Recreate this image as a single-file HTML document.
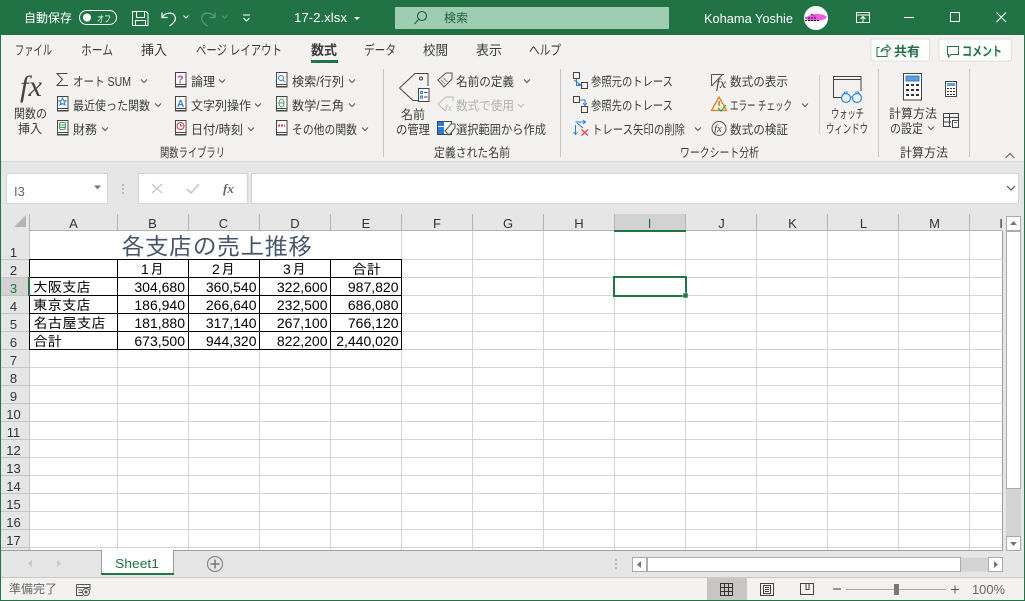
<!DOCTYPE html>
<html lang="ja"><head><meta charset="utf-8"><title>17-2.xlsx - Excel</title>
<style>
html,body{margin:0;padding:0;background:#fff}
svg{display:block;position:absolute;left:0;top:0}
text{font-family:"Liberation Sans","Noto Sans CJK JP",sans-serif}
.r{font-size:12.5px;fill:#3c3c3c}
.t{font-size:13.5px;fill:#3c3c3c}
.w{font-size:12px;fill:#fff}
.h{font-size:13px;fill:#333}
.c{font-size:14px;fill:#000}
.j{font-size:14px;fill:#000;font-family:"Liberation Sans","IPAGothic","Noto Sans CJK JP",sans-serif}
.n{font-size:14px;fill:#000;text-anchor:end}
.g{fill:none;stroke:#666;stroke-width:1}
</style></head><body>
<svg width="1025" height="601" viewBox="0 0 1025 601" xmlns="http://www.w3.org/2000/svg">
<defs>
<g id="bk"><rect x=".5" y=".5" width="10.5" height="14.500" fill="#fff" stroke="#444"/><path d="M1 12.500h10" stroke="#444" fill="none"/><path d="M0 14h11.500v1.500H0z" fill="#444"/></g>
<path id="ch" d="M-3 -1.5L0 1.5L3 -1.5" fill="none" stroke="#555" stroke-width="1"/>
</defs>
<!-- base -->
<rect width="1025" height="601" fill="#e6e6e6"/>
<rect x="0" y="0" width="1025" height="35" fill="#217346"/>
<rect x="1" y="35" width="1023" height="126" fill="#f3f2f1"/>
<rect x="1" y="161" width="1023" height="1" fill="#d6d6d6"/>
<rect x="1" y="578" width="1023" height="22" fill="#f3f2f1"/>
<rect x="1" y="577" width="1023" height="1" fill="#c8c8c8"/>

<!-- title bar -->
<text class="w" x="24" y="22" textLength="48" lengthAdjust="spacingAndGlyphs">自動保存</text>
<rect x="79.5" y="10.5" width="37" height="14" rx="7" fill="none" stroke="#fff"/>
<circle cx="87" cy="17.5" r="4" fill="#fff"/>
<text x="97" y="22" style="font-size:9px;fill:#fff" textLength="14" lengthAdjust="spacingAndGlyphs">オフ</text>
<path d="M132.500 11.500H146L148 13.500V25.500H132.500ZM136.500 11.500V17.500H144.500V11.500M135.500 25.500V20.500H145.500V25.500" fill="none" stroke="#fff"/>
<path d="M162 12.500V17.500H167.500M162.500 17C165 12.500 173 11.500 175 16.500C176.500 20 174 23 169.500 26" fill="none" stroke="#fff" stroke-width="1.200"/>
<path d="M183.500 15.500L186 18L188.500 15.500" fill="none" stroke="#fff"/>
<path d="M215 12.500V17.500H209.500M214.500 17C212 12.500 204 11.500 202 16.500C200.500 20 203 23 207.500 26" fill="none" stroke="#5f9a7c" stroke-width="1.200"/>
<path d="M222 15.500L224.500 18L227 15.500" fill="none" stroke="#5f9a7c"/>
<path d="M243 15H250M243.500 18L246.500 21L249.500 18" fill="none" stroke="#fff"/>
<text class="w" x="294" y="22" textLength="53" lengthAdjust="spacingAndGlyphs" style="font-size:13px">17-2.xlsx</text>
<path d="M354 17H360L357 20Z" fill="#fff"/>
<rect x="395" y="7" width="274" height="22" fill="#9fcdb3"/>
<circle cx="422" cy="16" r="4.500" fill="none" stroke="#1d5f3a" stroke-width="1.100"/>
<path d="M418.500 19.500L414.500 24" stroke="#1d5f3a" stroke-width="1.100"/>
<text x="444" y="22" style="font-size:12px;fill:#1d5f3a" textLength="24" lengthAdjust="spacingAndGlyphs">検索</text>
<text class="w" x="704" y="23" textLength="89" lengthAdjust="spacingAndGlyphs" style="font-size:12.500px">Kohama Yoshie</text>
<circle cx="816" cy="18" r="12" fill="#fff"/>
<path d="M807 17C811 13 823 13 827 17C825 21 813 22 807 20Z" fill="#f05ae6"/>
<path d="M805 18H817M805 20.500H819M811 14l3 2" stroke="#111" stroke-dasharray="2 1" fill="none"/>
<path d="M856.500 12.500H869.500V22.500H856.500ZM856.500 15H869.500M863 22V17M860.500 19L863 16.500L865.500 19" fill="none" stroke="#fff"/>
<path d="M904 17.500H914" stroke="#fff"/>
<rect x="950.500" y="12.500" width="9" height="9" fill="none" stroke="#fff"/>
<path d="M996.500 12.500L1006 22M1006 12.500L996.500 22" stroke="#fff"/>

<!-- ribbon tabs -->
<text class="t" x="15" y="55" textLength="37" lengthAdjust="spacingAndGlyphs">ファイル</text>
<text class="t" x="81" y="55" textLength="32" lengthAdjust="spacingAndGlyphs">ホーム</text>
<text class="t" x="141" y="55" textLength="26" lengthAdjust="spacingAndGlyphs">挿入</text>
<text class="t" x="196" y="55" textLength="86" lengthAdjust="spacingAndGlyphs">ページ レイアウト</text>
<text class="t" x="311" y="55" textLength="26" lengthAdjust="spacingAndGlyphs" font-weight="bold">数式</text>
<rect x="311" y="60" width="27" height="3" fill="#217346"/>
<text class="t" x="364" y="55" textLength="32" lengthAdjust="spacingAndGlyphs">データ</text>
<text class="t" x="423" y="55" textLength="25" lengthAdjust="spacingAndGlyphs">校閲</text>
<text class="t" x="476" y="55" textLength="26" lengthAdjust="spacingAndGlyphs">表示</text>
<text class="t" x="529" y="55" textLength="32" lengthAdjust="spacingAndGlyphs">ヘルプ</text>
<rect x="871" y="39" width="58.500" height="22" rx="2" fill="#fff" stroke="#e1dfdd"/>
<path d="M879.500 47.500H877V56.500H887V52M881 52C881.500 48.500 884 47.500 887 47.500V45L890.500 48.500L887 52V49.500C884.500 49.500 882.500 50 881 52Z" fill="none" stroke="#217346"/>
<text x="894" y="56" style="font-size:13px;fill:#217346;font-weight:bold" textLength="26" lengthAdjust="spacingAndGlyphs">共有</text>
<rect x="939" y="39" width="72.500" height="22" rx="2" fill="#fff" stroke="#e1dfdd"/>
<path d="M947.500 46.500H958.500V54.500H951L948.500 57V54.500H947.500Z" fill="none" stroke="#217346"/>
<text x="962" y="56" style="font-size:13px;fill:#217346;font-weight:bold" textLength="40" lengthAdjust="spacingAndGlyphs">コメント</text>

<!-- separators -->
<path d="M383.500 69V157M560.500 69V157M878.500 69V157M969.500 69V157" stroke="#c8c6c4"/>
<path d="M819.500 75V134" stroke="#d2d0ce"/>

<!-- group 1 -->
<text x="20" y="96" style="font-family:'Liberation Serif',serif;font-style:italic;font-size:30px;fill:#444" textLength="22" lengthAdjust="spacingAndGlyphs">fx</text>
<text class="r" x="14" y="118" textLength="33" lengthAdjust="spacingAndGlyphs">関数の</text>
<text class="r" x="18" y="133" textLength="24" lengthAdjust="spacingAndGlyphs">挿入</text>
<path d="M67.500 73.500H57L62.500 79.500L57 85.500H68" fill="none" stroke="#444"/>
<text class="r" x="73" y="86" textLength="58" lengthAdjust="spacingAndGlyphs">オート SUM</text>
<use href="#ch" x="144" y="81"/>
<use href="#bk" x="57" y="96"/>
<path d="M62.500 98L63.700 100.700H66L64.200 102.500L65 105L62.500 103.500L60 105L60.800 102.500L59 100.700H61.300Z" fill="none" stroke="#2b7cd3"/>
<text class="r" x="73" y="110" textLength="77" lengthAdjust="spacingAndGlyphs">最近使った関数</text>
<use href="#ch" x="158" y="105"/>
<use href="#bk" x="57" y="120"/>
<rect x="59.500" y="122.500" width="6" height="7" rx="1.500" fill="none" stroke="#3fa35b"/>
<path d="M59.500 125H65.500M59.500 127.500H65.500" stroke="#3fa35b"/>
<text class="r" x="73" y="134" textLength="24" lengthAdjust="spacingAndGlyphs">財務</text>
<use href="#ch" x="105" y="129"/>
<use href="#bk" x="175" y="72"/>
<text x="177" y="83" style="font-size:11px;fill:#b146c2;font-weight:bold">?</text>
<text class="r" x="191" y="86" textLength="24" lengthAdjust="spacingAndGlyphs">論理</text>
<use href="#ch" x="222" y="81"/>
<use href="#bk" x="175" y="96"/>
<text x="177" y="107" style="font-size:10px;fill:#2b7cd3;font-weight:bold">A</text>
<text class="r" x="191" y="110" textLength="60" lengthAdjust="spacingAndGlyphs">文字列操作</text>
<use href="#ch" x="258" y="105"/>
<use href="#bk" x="175" y="120"/>
<circle cx="180.500" cy="126" r="3.500" fill="none" stroke="#d13438"/>
<path d="M180.500 124V126H182.500" fill="none" stroke="#d13438"/>
<text class="r" x="191" y="134" textLength="52" lengthAdjust="spacingAndGlyphs">日付/時刻</text>
<use href="#ch" x="251" y="129"/>
<use href="#bk" x="276" y="72"/>
<circle cx="281" cy="78" r="2.500" fill="none" stroke="#2b7cd3"/>
<path d="M283 80L285 82" stroke="#2b7cd3"/>
<text class="r" x="292" y="86" textLength="52" lengthAdjust="spacingAndGlyphs">検索/行列</text>
<use href="#ch" x="352" y="81"/>
<use href="#bk" x="276" y="96"/>
<ellipse cx="281.500" cy="103" rx="2.500" ry="4" fill="none" stroke="#3fa35b"/>
<path d="M279 103H284" stroke="#3fa35b"/>
<text class="r" x="292" y="110" textLength="52" lengthAdjust="spacingAndGlyphs">数学/三角</text>
<use href="#ch" x="352" y="105"/>
<use href="#bk" x="276" y="120"/>
<path d="M278 125.500h2M281 125.500h2M284 125.500h1" stroke="#d13438" stroke-width="2"/>
<text class="r" x="292" y="134" textLength="65" lengthAdjust="spacingAndGlyphs">その他の関数</text>
<use href="#ch" x="365" y="129"/>
<text class="r" x="160" y="157" textLength="65" lengthAdjust="spacingAndGlyphs">関数ライブラリ</text>

<!-- group 2 -->
<path d="M399.500 88L415 73.500H428V86M399.500 88L413 100.500H419" fill="none" stroke="#444"/>
<circle cx="421" cy="78.500" r="1.500" fill="none" stroke="#444"/>
<rect x="418.500" y="88.500" width="10.500" height="13" fill="#fff" stroke="#444"/>
<path d="M420.500 91.500h2v2h-2zM420.500 96h2v2h-2z" fill="none" stroke="#2b7cd3"/>
<path d="M424 92.500h3.500M424 97h3.500" stroke="#444"/>
<text class="r" x="401" y="119" textLength="24" lengthAdjust="spacingAndGlyphs">名前</text>
<text class="r" x="396" y="134" textLength="34" lengthAdjust="spacingAndGlyphs">の管理</text>
<path d="M438 80L446 73H452V79L444 87Z" fill="none" stroke="#555"/>
<path d="M441 80l4 4M443.500 78l4 4" stroke="#888"/>
<text class="r" x="456" y="86" textLength="58" lengthAdjust="spacingAndGlyphs">名前の定義</text>
<use href="#ch" x="527" y="81"/>
<path d="M438 104L446 97H453V101M438 104L445 111" fill="none" stroke="#bbb"/>
<text x="445" y="111" style="font-size:9px;font-style:italic;fill:#bbb">fx</text>
<text class="r" x="456" y="110" textLength="58" lengthAdjust="spacingAndGlyphs" style="fill:#b0b0b0">数式で使用</text>
<path d="M518 104l3 3 3-3" fill="none" stroke="#bbb"/>
<rect x="437.500" y="121.500" width="14" height="13" fill="#fff" stroke="#444"/>
<rect x="438" y="127" width="6" height="7" fill="#2b7cd3"/>
<rect x="438" y="122" width="6" height="4" fill="#2b7cd3"/>
<path d="M445 131L451 124H455V128L449 135Z" fill="#f3f2f1" stroke="#555"/>
<text class="r" x="456" y="134" textLength="90" lengthAdjust="spacingAndGlyphs">選択範囲から作成</text>
<text class="r" x="434" y="157" textLength="76" lengthAdjust="spacingAndGlyphs">定義された名前</text>

<!-- group 3 -->
<rect x="573.500" y="72.500" width="6" height="6" fill="none" stroke="#444"/>
<rect x="581.500" y="82.500" width="6" height="6" fill="none" stroke="#444"/>
<path d="M576.500 79V85.500H580M578 84L581 85.500M574 80L581 85" fill="none" stroke="#2b7cd3"/>
<text class="r" x="591" y="86" textLength="82" lengthAdjust="spacingAndGlyphs">参照元のトレース</text>
<rect x="573.500" y="96.500" width="6" height="6" fill="none" stroke="#444"/>
<rect x="581.500" y="106.500" width="6" height="6" fill="none" stroke="#444"/>
<path d="M580 100H585V105M583 103L585 105.500L587 103" fill="none" stroke="#2b7cd3"/>
<text class="r" x="591" y="110" textLength="82" lengthAdjust="spacingAndGlyphs">参照先のトレース</text>
<path d="M575.500 125V134M573.500 132L575.500 134.500L577.500 132M575.500 122H585M583 120L585.500 122L583 124M577 123L583 128" fill="none" stroke="#2b7cd3"/>
<path d="M581.500 129.500L588 135.500M588 129.500L581.500 135.500" stroke="#e0443e" stroke-width="1.200"/>
<text class="r" x="592" y="134" textLength="93" lengthAdjust="spacingAndGlyphs">トレース矢印の削除</text>
<use href="#ch" x="698" y="129"/>
<path d="M711.500 86V74.500H724M711.500 86L722 75" fill="none" stroke="#555"/>
<text x="716" y="88" style="font-family:'Liberation Serif',serif;font-style:italic;font-size:14px;fill:#444">fx</text>
<text class="r" x="730" y="86" textLength="58" lengthAdjust="spacingAndGlyphs">数式の表示</text>
<path d="M719 97L711.500 110.500H726.500Z" fill="#fdf3df" stroke="#d9822b" stroke-width="1.300"/>
<path d="M719 101V106" stroke="#7a3a0c"/>
<path d="M718 108L721 111L726 105" fill="none" stroke="#3fa35b" stroke-width="1.300"/>
<text class="r" x="730" y="110" textLength="62" lengthAdjust="spacingAndGlyphs">エラー チェック</text>
<use href="#ch" x="805" y="105"/>
<circle cx="719" cy="128.500" r="7" fill="none" stroke="#555"/>
<text x="714" y="132" style="font-family:'Liberation Serif',serif;font-style:italic;font-size:11px;fill:#444">fx</text>
<text class="r" x="730" y="134" textLength="58" lengthAdjust="spacingAndGlyphs">数式の検証</text>
<text class="r" x="680" y="157" textLength="79" lengthAdjust="spacingAndGlyphs">ワークシート分析</text>
<!-- watch -->
<path d="M841 97.500H833.500V76.500H861V91" fill="none" stroke="#444"/>
<path d="M833.500 79.500H861" stroke="#444"/>
<circle cx="846" cy="98" r="4.500" fill="none" stroke="#2b88d8" stroke-width="1.200"/>
<circle cx="857" cy="98" r="4.500" fill="none" stroke="#2b88d8" stroke-width="1.200"/>
<path d="M850.500 97H852.500M842 96L845 92H848M861 96L858 92H855" fill="none" stroke="#2b88d8"/>
<text class="r" x="831" y="118" textLength="33" lengthAdjust="spacingAndGlyphs">ウォッチ</text>
<text class="r" x="826" y="133" textLength="42" lengthAdjust="spacingAndGlyphs">ウィンドウ</text>
<!-- calc -->
<rect x="903.500" y="73.500" width="18" height="26.500" fill="#fff" stroke="#444"/>
<rect x="906" y="76" width="13" height="5" fill="#5ea0dc" stroke="#2b7cd3"/>
<path d="M906 84h3v2h-3zM911 84h3v2h-3zM916 84h3v2h-3zM906 89h3v2h-3zM911 89h3v2h-3zM916 89h3v2h-3zM906 94h3v2h-3zM911 94h3v2h-3zM916 94h3v2h-3z" fill="#333"/>
<rect x="945.500" y="81.500" width="11" height="15" fill="#fff" stroke="#444"/>
<rect x="947" y="83" width="8" height="3" fill="#5ea0dc"/>
<path d="M947 88h2v1h-2zM950 88h2v1h-2zM953 88h2v1h-2zM947 91h2v1h-2zM950 91h2v1h-2zM953 91h2v1h-2zM947 94h2v1h-2zM950 94h2v1h-2zM953 94h2v1h-2z" fill="#333"/>
<path d="M943.500 113.500H958.500V121M943.500 113.500V126.500H951M943.500 117.500H958.500M943.500 122H951M949.500 113.500V126.500" fill="none" stroke="#444"/>
<rect x="952.500" y="120.500" width="6" height="7" fill="#fff" stroke="#444"/>
<path d="M954 122.500h3" stroke="#2b7cd3"/>
<text class="r" x="889" y="118" textLength="48" lengthAdjust="spacingAndGlyphs">計算方法</text>
<text class="r" x="890" y="133" textLength="33" lengthAdjust="spacingAndGlyphs">の設定</text>
<use href="#ch" x="931" y="128"/>
<text class="r" x="900" y="157" textLength="48" lengthAdjust="spacingAndGlyphs">計算方法</text>
<path d="M1005.500 158L1010 153.500L1014.500 158" fill="none" stroke="#555"/>

<!-- formula bar -->
<rect x="6.500" y="173.500" width="101" height="30" fill="#fff" stroke="#d4d4d4"/>
<text x="14" y="196" style="font-size:13px;fill:#666">I3</text>
<path d="M94 185.500H101L97.500 189.500Z" fill="#777"/>
<path d="M123 184v2M123 188v2M123 192v2" stroke="#aaa" stroke-width="1.500"/>
<rect x="138.500" y="173.500" width="109" height="30" fill="#fff" stroke="#d4d4d4"/>
<path d="M152 184L162 193M162 184L152 193" stroke="#c8c8c8" stroke-width="1.400"/>
<path d="M187 189L191 193L199 184" fill="none" stroke="#c8c8c8" stroke-width="1.600"/>
<text x="223" y="193" style="font-family:'Liberation Serif',serif;font-style:italic;font-weight:bold;font-size:13px;fill:#666">fx</text>
<rect x="251.500" y="173.500" width="767" height="30" fill="#fff" stroke="#d4d4d4"/>
<path d="M1007 186L1011 190L1015 186" fill="none" stroke="#555" stroke-width="1.200"/>

<!-- sheet -->
<rect x="29" y="231" width="973" height="319" fill="#fff"/>
<rect x="614" y="214" width="71" height="17" fill="#d2d2d2"/>
<rect x="1" y="277" width="28" height="18" fill="#d2d2d2"/>
<!-- gridlines -->
<path stroke="#d4d4d4" fill="none" d="M117.500 231V550M188.500 231V550M259.500 231V550M330.500 231V550M401.500 231V550M472.500 231V550M543.500 231V550M614.500 231V550M685.500 231V550M756.500 231V550M827.500 231V550M898.500 231V550M969.500 231V550M29 259.500H1002M29 277.500H1002M29 295.500H1002M29 313.500H1002M29 331.500H1002M29 349.500H1002M29 367.500H1002M29 385.500H1002M29 403.500H1002M29 421.500H1002M29 439.500H1002M29 457.500H1002M29 475.500H1002M29 493.500H1002M29 511.500H1002M29 529.500H1002M29 547.500H1002"/>
<rect x="29" y="231" width="372" height="28" fill="#fff"/>
<!-- headers lines -->
<path stroke="#b4b4b4" fill="none" d="M29.500 214V231M117.500 214V231M188.500 214V231M259.500 214V231M330.500 214V231M401.500 214V231M472.500 214V231M543.500 214V231M614.500 214V231M685.500 214V231M756.500 214V231M827.500 214V231M898.500 214V231M969.500 214V231M29 230.500H1002"/>
<path stroke="#c4c4c4" fill="none" d="M1 259.500H29M1 277.500H29M1 295.500H29M1 313.500H29M1 331.500H29M1 349.500H29M1 367.500H29M1 385.500H29M1 403.500H29M1 421.500H29M1 439.500H29M1 457.500H29M1 475.500H29M1 493.500H29M1 511.500H29M1 529.500H29M1 547.500H29M29.500 231V550"/>
<path d="M26 215V227H14Z" fill="#b4b4b4"/>
<rect x="614" y="230" width="72" height="2" fill="#217346"/>
<path stroke="#9e9e9e" fill="none" d="M1002.500 231V550.500M1 550.500H1003"/>
<!-- column heads -->
<g text-anchor="middle">
<text class="h" x="73.500" y="228">A</text><text class="h" x="152.500" y="228">B</text><text class="h" x="223.500" y="228">C</text><text class="h" x="295" y="228">D</text><text class="h" x="366" y="228">E</text><text class="h" x="437" y="228">F</text><text class="h" x="508" y="228">G</text><text class="h" x="579" y="228">H</text><text class="h" x="649.500" y="228" style="fill:#217346">I</text><text class="h" x="721.500" y="228">J</text><text class="h" x="792.500" y="228">K</text><text class="h" x="863.500" y="228">L</text><text class="h" x="934.500" y="228">M</text><text class="h" x="1001" y="228">I</text>
</g>
<g text-anchor="middle">
<text class="h" x="13.500" y="257">1</text><text class="h" x="13.500" y="275">2</text><text class="h" x="13.500" y="293" style="fill:#217346">3</text><text class="h" x="13.500" y="311">4</text><text class="h" x="13.500" y="329">5</text><text class="h" x="13.500" y="347">6</text><text class="h" x="13.500" y="365">7</text><text class="h" x="13.500" y="383">8</text><text class="h" x="13.500" y="401">9</text><text class="h" x="13.500" y="419">10</text><text class="h" x="13.500" y="437">11</text><text class="h" x="13.500" y="455">12</text><text class="h" x="13.500" y="473">13</text><text class="h" x="13.500" y="491">14</text><text class="h" x="13.500" y="509">15</text><text class="h" x="13.500" y="527">16</text><text class="h" x="13.500" y="545">17</text>
</g>
<!-- table borders -->
<path stroke="#000" fill="none" d="M29.500 259V349.500M117.500 259V350M188.500 259V350M259.500 259V350M330.500 259V350M401.500 259V350M29 259.500H402M29 277.500H402M29 295.500H402M29 313.500H402M29 331.500H402M29 349.500H402"/>
<rect x="28" y="277" width="2" height="19" fill="#217346"/>
<!-- cell text -->
<text x="121" y="255" style="font-size:24px;fill:#44546a;font-family:'Liberation Sans','IPAGothic','Noto Sans CJK JP',sans-serif" textLength="191" lengthAdjust="spacingAndGlyphs">各支店の売上推移</text>
<text class="j" x="141" y="274" textLength="23" lengthAdjust="spacing">1 月</text>
<text class="j" x="212" y="274" textLength="23" lengthAdjust="spacing">2 月</text>
<text class="j" x="283" y="274" textLength="23" lengthAdjust="spacing">3 月</text>
<text class="j" x="352" y="274" textLength="29" lengthAdjust="spacingAndGlyphs">合計</text>
<text class="j" x="33" y="292" textLength="58" lengthAdjust="spacingAndGlyphs">大阪支店</text>
<text class="j" x="33" y="310" textLength="58" lengthAdjust="spacingAndGlyphs">東京支店</text>
<text class="j" x="33" y="328" textLength="73" lengthAdjust="spacingAndGlyphs">名古屋支店</text>
<text class="j" x="33" y="346" textLength="29" lengthAdjust="spacingAndGlyphs">合計</text>
<text class="n" x="185" y="292">304,680</text><text class="n" x="256.500" y="292">360,540</text><text class="n" x="327.500" y="292">322,600</text><text class="n" x="398.500" y="292">987,820</text>
<text class="n" x="185" y="310">186,940</text><text class="n" x="256.500" y="310">266,640</text><text class="n" x="327.500" y="310">232,500</text><text class="n" x="398.500" y="310">686,080</text>
<text class="n" x="185" y="328">181,880</text><text class="n" x="256.500" y="328">317,140</text><text class="n" x="327.500" y="328">267,100</text><text class="n" x="398.500" y="328">766,120</text>
<text class="n" x="185" y="346">673,500</text><text class="n" x="256.500" y="346">944,320</text><text class="n" x="327.500" y="346">822,200</text><text class="n" x="398.500" y="346">2,440,020</text>
<!-- selection -->
<rect x="614" y="277" width="72" height="19" fill="none" stroke="#217346" stroke-width="2"/>
<rect x="683" y="293" width="5" height="5" fill="#217346" stroke="#fff" stroke-width=".5"/>

<!-- v scrollbar -->
<rect x="1006" y="216" width="15" height="320" fill="#d4d4d4"/>
<rect x="1006.500" y="216.500" width="14" height="14" fill="#fff" stroke="#ababab"/>
<rect x="1006.500" y="231.500" width="14" height="257" fill="#fff" stroke="#ababab"/>
<rect x="1006.500" y="536.500" width="14" height="14" fill="#fff" stroke="#ababab"/>
<path d="M1010 225H1017L1013.500 221Z" fill="#777"/>
<path d="M1010 542H1017L1013.500 546Z" fill="#777"/>

<!-- tab bar -->
<path d="M32 560V567L28 563.500Z" fill="#c8c8c8"/>
<path d="M57 560V567L61 563.500Z" fill="#c8c8c8"/>
<rect x="101" y="550" width="73" height="24" fill="#fff"/>
<path d="M101.500 550V575M173.500 550V575" stroke="#9e9e9e"/>
<rect x="101" y="573" width="73" height="2" fill="#217346"/>
<text x="115" y="568" style="font-size:13px;fill:#217346" textLength="44" lengthAdjust="spacingAndGlyphs">Sheet1</text>
<circle cx="215" cy="564" r="7.500" fill="none" stroke="#888" stroke-width="1.200"/>
<path d="M215 559.500V568.500M210.500 564H219.500" stroke="#777" stroke-width="1.500"/>
<path d="M616 559v2M616 563v2M616 567v2" stroke="#aaa" stroke-width="1.500"/>
<rect x="632.500" y="557.500" width="14" height="14" fill="#fff" stroke="#ababab"/>
<rect x="647.500" y="557.500" width="313" height="14" fill="#fff" stroke="#ababab"/>
<rect x="961" y="557.500" width="27" height="14" fill="#d4d4d4"/>
<rect x="988.500" y="557.500" width="14" height="14" fill="#fff" stroke="#ababab"/>
<path d="M641 561V568L637 564.500Z" fill="#777"/>
<path d="M994 561V568L998 564.500Z" fill="#777"/>

<!-- status bar -->
<text x="9" y="593" style="font-size:12px;fill:#666" textLength="48" lengthAdjust="spacingAndGlyphs">準備完了</text>
<path d="M76.500 584.500H90V590M76.500 584.500V595.500H83M76.500 587.500H90M78.500 590H82M78.500 592.500H82" fill="none" stroke="#555"/>
<circle cx="86" cy="592" r="3.500" fill="none" stroke="#555"/>
<circle cx="86" cy="592" r="1.500" fill="#555"/>
<rect x="707" y="578" width="40" height="22" fill="#c8c6c4"/>
<path d="M720.500 583.500H732.500V595.500H720.500ZM724.500 583.500V595.500M728.500 583.500V595.500M720.500 587.500H732.500M720.500 591.500H732.500" fill="none" stroke="#333"/>
<path d="M760.500 583.500H773.500V595.500H760.500ZM763.500 585.500H770.500V593.500H763.500ZM765 587.500H769M765 589.500H769M765 591.500H769" fill="none" stroke="#444"/>
<path d="M800.500 583.500H813.500V594.500H800.500ZM806 583.500V589.500H809V583.500" fill="none" stroke="#444"/>
<path d="M833 589H841" stroke="#555" stroke-width="1.200"/>
<path d="M846 589.500H946" stroke="#aaa"/>
<rect x="894" y="584" width="5" height="11" fill="#777"/>
<path d="M951 589.500H959M955 585.500V593.500" stroke="#555"/>
<text x="972" y="594" style="font-size:13px;fill:#666" textLength="33" lengthAdjust="spacingAndGlyphs">100%</text>

<!-- window border -->
<rect x="0" y="0" width="1" height="601" fill="#217346"/>
<rect x="1024" y="0" width="1" height="601" fill="#217346"/>
<rect x="0" y="600" width="1025" height="1" fill="#217346"/>
</svg>
</body></html>
